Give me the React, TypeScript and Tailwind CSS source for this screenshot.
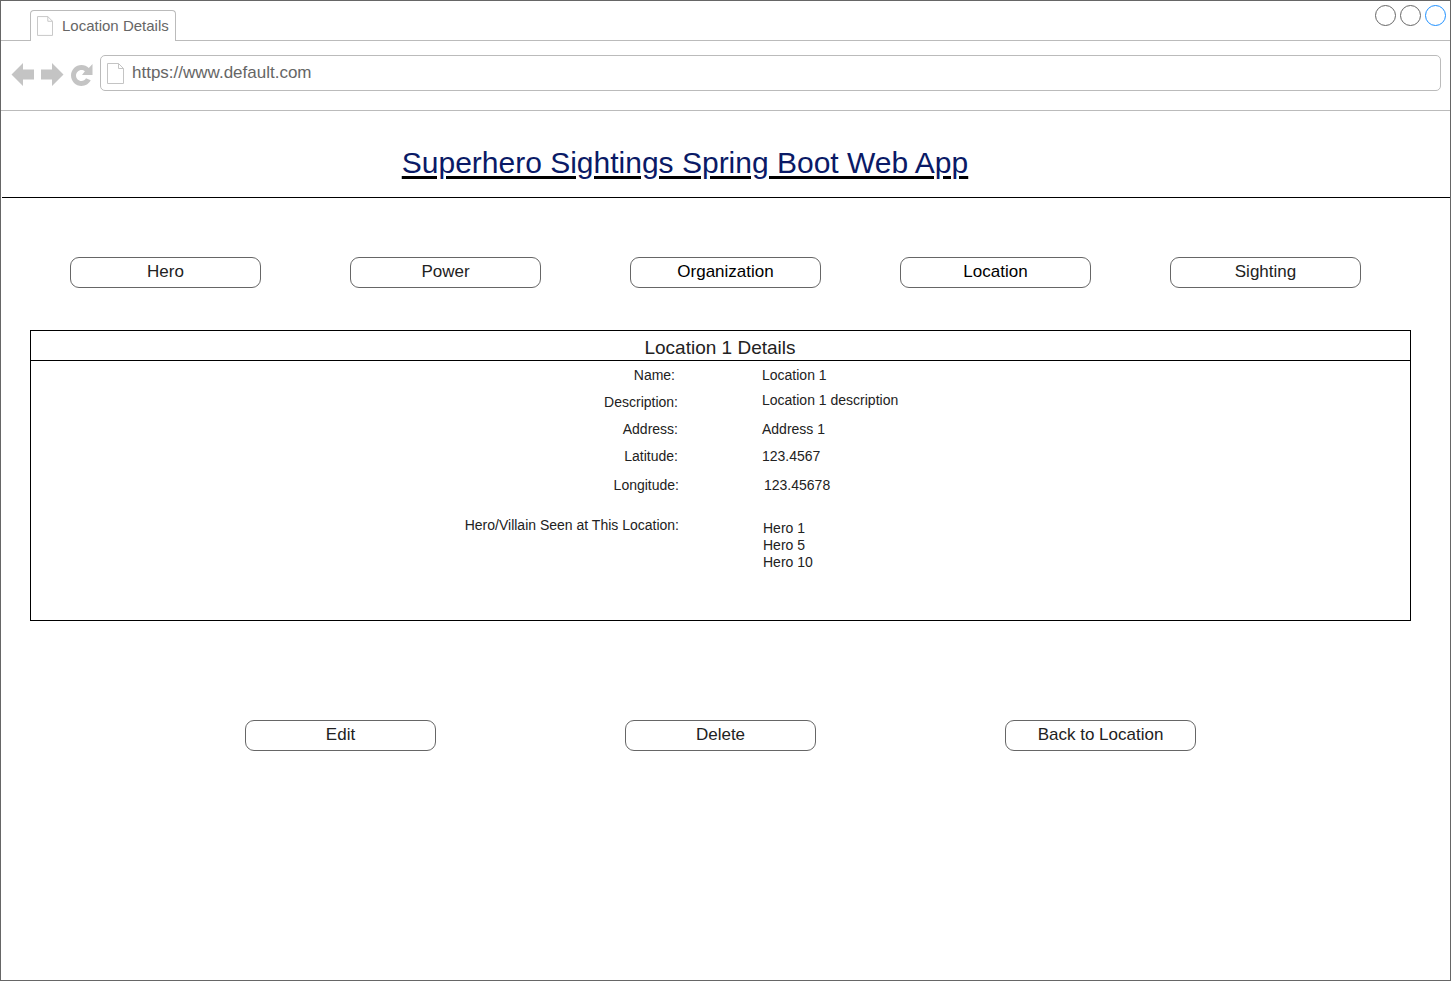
const font = "font-['Liberation_Sans',Arial,sans-serif]"

function PageIcon({ className }: { className: string }) {
  return (
    <svg className={className} viewBox="0 0 17 21" fill="none">
      <path d="M0.5 0.5H11.5L16.5 5.5V20.5H0.5Z" fill="#fff" stroke="#c4c4c4" />
      <path d="M11.5 0.5V5.5H16.5" stroke="#c4c4c4" />
    </svg>
  )
}

function NavButton({ label, className }: { label: string; className: string }) {
  return (
    <button className={`w-[191px] h-[31px] border border-[#666] rounded-[9px] bg-white text-[17px] leading-[26px] pb-[1px] text-[#222] text-center ${className}`}>
      {label}
    </button>
  )
}

const rows = [
  { label: 'Name:', value: 'Location 1', rowClass: 'h-[25px]', labelClass: 'w-[644px] pt-[6px]', valueClass: 'ml-[87px] pt-[6px]' },
  { label: 'Description:', value: 'Location 1 description', rowClass: 'h-[28px]', labelClass: 'w-[647px] pt-[8px]', valueClass: 'ml-[84px] pt-[6px]' },
  { label: 'Address:', value: 'Address 1', rowClass: 'h-[27px]', labelClass: 'w-[647px] pt-[7px]', valueClass: 'ml-[84px] pt-[7px]' },
  { label: 'Latitude:', value: '123.4567', rowClass: 'h-[29px]', labelClass: 'w-[647px] pt-[7px]', valueClass: 'ml-[84px] pt-[7px]' },
  { label: 'Longitude:', value: '123.45678', rowClass: 'h-[47px]', labelClass: 'w-[648px] pt-[7px]', valueClass: 'ml-[85px] pt-[7px]' },
]

export default function App() {
  return (
    <div className={`w-[1451px] h-[981px] bg-white border border-[#666] text-[#222] ${font}`}>
      {/* Tab strip */}
      <div className="h-[40px] border-b border-[#bbb] pt-[9px] pl-[29px] flex justify-between">
        <div className="w-[146px] h-[31px] border border-b-0 border-[#bbb] rounded-t-[4px] bg-white flex items-center pl-[6px] gap-[9px]">
          <PageIcon className="w-[16px] h-[20px]" />
          <span className="text-[15px] text-[#666]">Location Details</span>
        </div>
        <div className="flex gap-[4px] mr-[4px] -mt-[5px]">
          <div className="w-[21px] h-[21px] rounded-full border border-[#666]" />
          <div className="w-[21px] h-[21px] rounded-full border border-[#666]" />
          <div className="w-[21px] h-[21px] rounded-full border border-[#1e90ff]" />
        </div>
      </div>

      {/* Address bar */}
      <div className="h-[70px] border-b border-[#bbb] flex items-start pt-[14px] pl-[10px]">
        <div className="flex items-center gap-[7px] h-[36px] pt-[3px]">
          <svg className="w-[23px] h-[25px]" viewBox="0 0 23 25">
            <path d="M0.5 12.5L12 1V7.5H23V17.5H12V24Z" fill="#c4c4c4" />
          </svg>
          <svg className="w-[23px] h-[25px]" viewBox="0 0 23 25">
            <path d="M22.5 12.5L11 1V7.5H0V17.5H11V24Z" fill="#c4c4c4" />
          </svg>
          <svg className="w-[22px] h-[24px]" viewBox="0 0 22 24">
            <path fillRule="evenodd" d="M10.5 2C4.7 2 0 6.7 0 12.5C0 18.3 4.7 23 10.5 23C14.5 23 18 20.7 19.7 17.3L15 15.3C14 17 12.4 18 10.5 18C7.5 18 5 15.5 5 12.5C5 9.5 7.5 7 10.5 7C11.8 7 13 7.5 13.9 8.2L11 12H21.5V1L17.8 4.9C15.9 3 13.3 2 10.5 2Z" fill="#c4c4c4" />
          </svg>
        </div>
        <div className="ml-[7px] w-[1341px] h-[36px] border border-[#bbb] rounded-[5px] flex items-center pl-[6px] gap-[8px]">
          <PageIcon className="w-[17px] h-[21px] mt-[1px]" />
          <span className="text-[17px] text-[#666]">https://www.default.com</span>
        </div>
      </div>

      {/* Title */}
      <div className="h-[87px] border-b border-black ml-[1px] flex justify-center pt-[32px] pr-[82px]">
        <h1 className="text-[30px] leading-[40px] text-[#0a1a66] underline decoration-black decoration-[3px] underline-offset-[3px]">
          Superhero Sightings Spring Boot Web App
        </h1>
      </div>

      {/* Main nav */}
      <nav className="flex pt-[59px] pl-[69px]">
        <NavButton label="Hero" className="" />
        <NavButton label="Power" className="ml-[89px]" />
        <NavButton label="Organization" className="ml-[89px] text-black" />
        <NavButton label="Location" className="ml-[79px] text-black" />
        <NavButton label="Sighting" className="ml-[79px]" />
      </nav>

      {/* Details panel */}
      <section className="mt-[42px] ml-[29px] w-[1381px] h-[291px] border border-black">
        <div className="h-[30px] border-b border-black text-center text-[19px] leading-[33px] pr-[1px]">Location 1 Details</div>
        <div className="text-[14px] leading-[16px]">
          {rows.map((row) => (
            <div key={row.label} className={`flex ${row.rowClass}`}>
              <div className={`text-right ${row.labelClass}`}>{row.label}</div>
              <div className={row.valueClass}>{row.value}</div>
            </div>
          ))}
          <div className="flex">
            <div className="w-[648px] text-right">Hero/Villain Seen at This Location:</div>
            <div className="ml-[84px] pt-[3px] leading-[17px]">
              <div>Hero 1</div>
              <div>Hero 5</div>
              <div>Hero 10</div>
            </div>
          </div>
        </div>
      </section>

      {/* Actions */}
      <div className="flex pt-[99px] pl-[244px]">
        <NavButton label="Edit" className="" />
        <NavButton label="Delete" className="ml-[189px]" />
        <NavButton label="Back to Location" className="ml-[189px]" />
      </div>
    </div>
  )
}
